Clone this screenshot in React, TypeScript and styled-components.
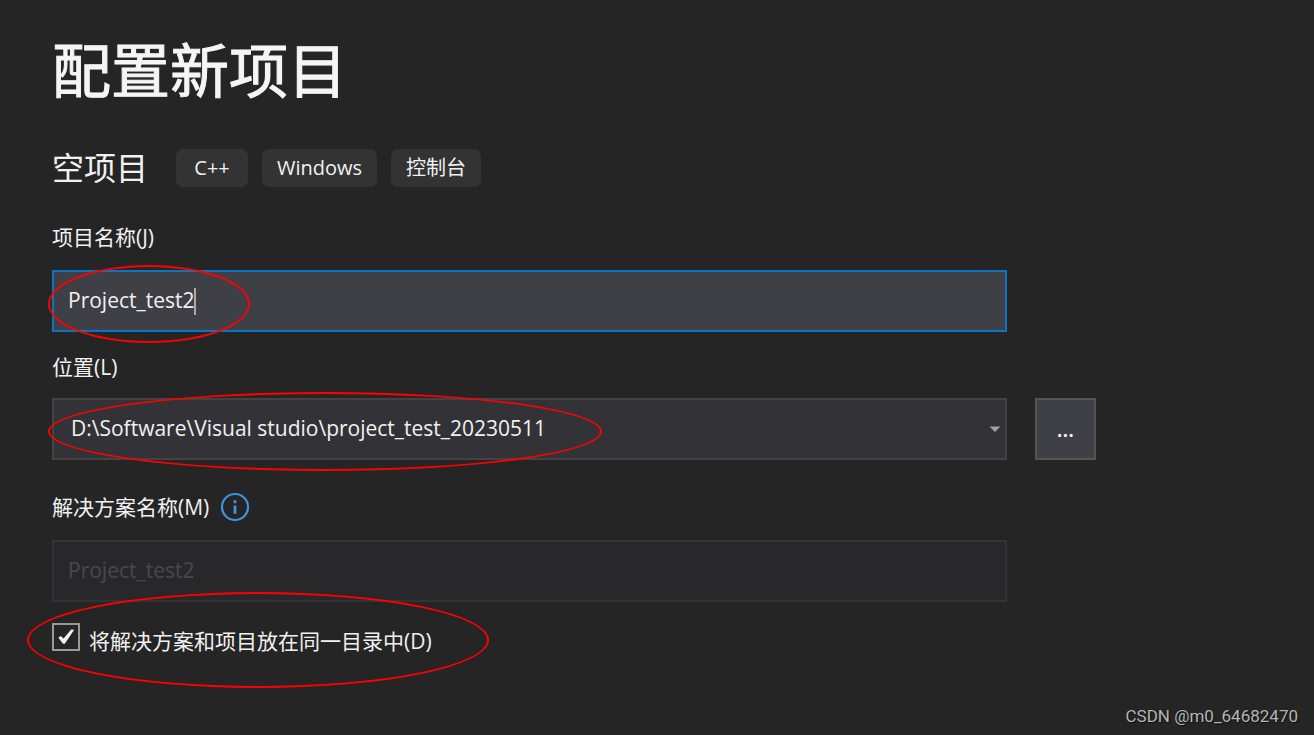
import React, { useState } from 'react';
import styled, { createGlobalStyle } from 'styled-components';

const GlobalStyle = createGlobalStyle`
  *, *::before, *::after {
    box-sizing: border-box;
  }
  body {
    margin: 0;
    background: #252526;
    color: #f1f1f1;
    font-family: 'Open Sans', 'Noto Sans CJK SC', sans-serif;
  }
`;

const Page = styled.main`
  position: relative;
  min-height: 100vh;
  padding: 30px 52px 48px;
`;

const Title = styled.h1`
  margin: 0;
  font-size: 59px;
  line-height: 80px;
  font-weight: 400;
  color: #f5f5f5;
  -webkit-text-stroke: 1px #f5f5f5;
`;

const TemplateRow = styled.div`
  display: flex;
  align-items: center;
  gap: 28px;
  margin-top: 38px;
`;

const TemplateName = styled.h2`
  margin: 0;
  font-size: 32px;
  line-height: 40px;
  font-weight: 400;
`;

const TagList = styled.ul`
  display: flex;
  gap: 14px;
  margin: 0;
  padding: 0;
  list-style: none;
`;

const Tag = styled.li`
  min-width: 72px;
  padding: 0 15px;
  border-radius: 7px;
  background: #333334;
  font-size: 20px;
  line-height: 38px;
  text-align: center;
`;

const Form = styled.form`
  display: grid;
  grid-template-columns: minmax(0, 1fr) 61px;
  column-gap: 28px;
  max-width: 1044px;
`;

const LabelRow = styled.div<{ $top: number; $bottom: number }>`
  grid-column: 1 / -1;
  display: flex;
  align-items: center;
  gap: 11px;
  margin: ${(p) => p.$top}px 0 ${(p) => p.$bottom}px;
  font-size: 21px;
  line-height: 30px;
`;

const Field = styled.div`
  grid-column: 1;
  position: relative;
  height: 62px;
`;

const TextInput = styled.input`
  display: block;
  width: 100%;
  height: 100%;
  padding: 0 14px 2px;
  border: 2px solid #0a75c2;
  border-radius: 0;
  outline: none;
  background: #3f3f46;
  color: #f1f1f1;
  caret-color: transparent;
  font: inherit;
  font-size: 21px;

  &:disabled {
    border-color: #333337;
    background: #28282b;
    color: #48484b;
  }
`;

const TextCursor = styled.span`
  position: absolute;
  top: 18px;
  left: 142px;
  width: 2px;
  height: 27px;
  background: #a9a9ad;
`;

const LocationSelect = styled.select`
  appearance: none;
  display: block;
  width: 100%;
  height: 100%;
  padding: 0 40px 2px 17px;
  border: 2px solid #434346;
  border-radius: 0;
  outline: none;
  background: #333337;
  color: #f1f1f1;
  font: inherit;
  font-size: 21px;
`;

const SelectArrow = styled.svg`
  position: absolute;
  top: 28px;
  right: 6px;
  width: 12px;
  height: 7px;
  pointer-events: none;
`;

const BrowseButton = styled.button`
  grid-column: 2;
  height: 62px;
  padding: 0;
  border: 2px solid #555558;
  background: #3f3f46;
  color: #f1f1f1;
  font: inherit;
  font-size: 21px;
  font-weight: 600;
`;

const InfoButton = styled.button`
  display: flex;
  padding: 0;
  border: 0;
  background: none;
`;

const CheckRow = styled.div`
  grid-column: 1 / -1;
  position: relative;
  display: flex;
  align-items: flex-start;
  gap: 9px;
  margin-top: 21px;
  font-size: 21px;
  line-height: 36px;
`;

const CheckBox = styled.span`
  position: relative;
  width: 28px;
  height: 28px;
`;

const CheckInput = styled.input`
  appearance: none;
  display: block;
  width: 28px;
  height: 28px;
  margin: 0;
  border: 2px solid #999999;
  background: #252526;

  &:not(:checked) + svg {
    display: none;
  }
`;

const CheckMark = styled.svg`
  position: absolute;
  inset: 0;
  pointer-events: none;
`;

const Ring = styled.span<{ $left: number; $top: number; $width: number; $height: number }>`
  position: absolute;
  left: ${(p) => p.$left}px;
  top: ${(p) => p.$top}px;
  width: ${(p) => p.$width}px;
  height: ${(p) => p.$height}px;
  border: 2px solid #ff0000;
  border-radius: 50%;
  pointer-events: none;
`;

const Watermark = styled.small`
  position: absolute;
  right: 16px;
  bottom: 8px;
  color: #b4b4b4;
  font-family: Roboto, sans-serif;
  font-size: 17px;
  line-height: 22px;
  text-shadow: 1px 1px 1px #111111;
`;

const tags = ['C++', 'Windows', '控制台'];
const location = 'D:\\Software\\Visual studio\\project_test_20230511';

export default function App() {
  const [name, setName] = useState('Project_test2');
  const [sameFolder, setSameFolder] = useState(true);

  return (
    <>
      <GlobalStyle />
      <Page>
        <Title>配置新项目</Title>
        <TemplateRow>
          <TemplateName>空项目</TemplateName>
          <TagList>
            {tags.map((tag) => (
              <Tag key={tag}>{tag}</Tag>
            ))}
          </TagList>
        </TemplateRow>
        <Form onSubmit={(e) => e.preventDefault()}>
          <LabelRow $top={34} $bottom={18}>
            <label htmlFor="project-name">项目名称(J)</label>
          </LabelRow>
          <Field>
            <TextInput id="project-name" value={name} onChange={(e) => setName(e.target.value)} />
            <TextCursor />
            <Ring $left={-4} $top={-5} $width={202} $height={78} />
          </Field>

          <LabelRow $top={20} $bottom={16}>
            <label htmlFor="location">位置(L)</label>
          </LabelRow>
          <Field>
            <LocationSelect id="location" defaultValue={location}>
              <option>{location}</option>
            </LocationSelect>
            <SelectArrow viewBox="0 0 12 7">
              <path d="M0.5 0.5H11.5L6 6Z" fill="#a0a0a0" />
            </SelectArrow>
            <Ring $left={-4} $top={-6} $width={554} $height={79} />
          </Field>
          <BrowseButton type="button">...</BrowseButton>

          <LabelRow $top={32} $bottom={18}>
            <label htmlFor="solution-name">解决方案名称(M)</label>
            <InfoButton type="button" aria-label="解决方案名称">
              <svg width="30" height="30" viewBox="0 0 30 30" fill="none">
                <circle cx="15" cy="15" r="13" stroke="#3c94dc" strokeWidth="2.2" />
                <path d="M15 8.2v3M15 13.4v8.4" stroke="#3c94dc" strokeWidth="2.8" />
              </svg>
            </InfoButton>
          </LabelRow>
          <Field>
            <TextInput id="solution-name" value={name} disabled readOnly />
          </Field>

          <CheckRow>
            <CheckBox>
              <CheckInput
                id="same-folder"
                type="checkbox"
                checked={sameFolder}
                onChange={(e) => setSameFolder(e.target.checked)}
              />
              <CheckMark width="28" height="28" viewBox="0 0 28 28">
                <path
                  d="M6.4 14.8L8.6 13L11.6 15.6L19.2 6.4L22.2 6.8L12.8 20.8H11Z"
                  fill="#f1f1f1"
                />
              </CheckMark>
            </CheckBox>
            <label htmlFor="same-folder">将解决方案和项目放在同一目录中(D)</label>
            <Ring $left={-25} $top={-31} $width={462} $height={96} />
          </CheckRow>
        </Form>
        <Watermark>CSDN @m0_64682470</Watermark>
      </Page>
    </>
  );
}
